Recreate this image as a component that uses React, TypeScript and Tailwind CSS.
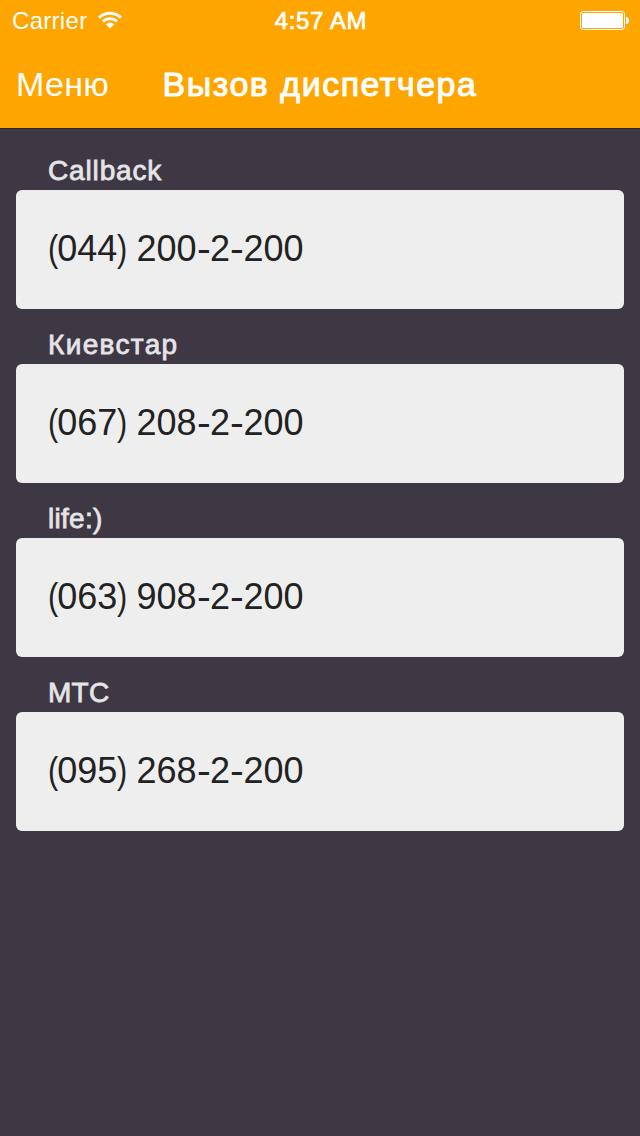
import React from "react";

interface Dispatcher {
  name: string;
  phone: string;
  nameClass: string;
}

const dispatchers: Dispatcher[] = [
  { name: "Callback", phone: "(044) 200-2-200", nameClass: "tracking-[0.85px]" },
  { name: "Киевстар", phone: "(067) 208-2-200", nameClass: "tracking-[1.35px]" },
  { name: "life:)", phone: "(063) 908-2-200", nameClass: "tracking-[0.3px]" },
  { name: "МТС", phone: "(095) 268-2-200", nameClass: "tracking-[0.3px]" },
];

const WifiIcon = () => (
  <svg className="ml-[10px] -mt-0.5" width="26" height="18" viewBox="0 0 26 18" fill="none">
    <path d="M2.1 6.700a15.4 15.4 0 0 1 21.8 0" stroke="white" strokeWidth="3" />
    <path d="M5.9 10.500a10 10 0 0 1 14.2 0" stroke="white" strokeWidth="2.800" />
    <path d="M8.7 13.300a6.1 6.1 0 0 1 8.6 0L13 17.600z" fill="white" />
  </svg>
);

const BatteryIcon = () => (
  <svg width="50" height="20" viewBox="0 0 50 20" fill="none">
    <rect x="0.5" y="0.5" width="44" height="18" rx="2.5" stroke="white" />
    <rect x="2" y="2" width="41" height="15" rx="1.5" fill="white" />
    <path d="M46 6c2 0 3 1.500 3 3.500s-1 3.500-3 3.500z" fill="white" />
  </svg>
);

const StatusBar = () => (
  <div className="h-10 pt-0.5 grid grid-cols-3 items-center pl-3 pr-[10px] text-2xl leading-none">
    <div className="flex items-center">
      <span className="tracking-[0.3px]">Carrier</span>
      <WifiIcon />
    </div>
    <span className="text-center tracking-[0.6px] [-webkit-text-stroke:0.7px_white]">4:57 AM</span>
    <div className="flex justify-end">
      <BatteryIcon />
    </div>
  </div>
);

const NavBar = () => (
  <div className="h-[88px] grid grid-cols-[120px_1fr_120px] items-center px-4 text-[34px] leading-none">
    <button className="text-left tracking-[0.3px]">Меню</button>
    <h1 className="text-center whitespace-nowrap tracking-[1.5px] [-webkit-text-stroke:1px_white]">Вызов диспетчера</h1>
  </div>
);

// narrow brackets and wide hyphens
const charClass = (char: string) => {
  if (char === "(" || char === ")") return "inline-block w-[9.2px] origin-left scale-x-[0.85]";
  if (char === "-") return "inline-block w-[13.5px] origin-left scale-x-[1.15]";
  return "";
};

const PhoneNumber = ({ value }: { value: string }) => (
  <span className="whitespace-pre">
    {value.split(/([()-])/).map((part, i) => (
      <span key={i} className={charClass(part)}>{part}</span>
    ))}
  </span>
);

const App = () => {
  return (
    <div className="w-[640px] h-[1136px] overflow-hidden bg-[#3e3744] font-['Liberation_Sans',Arial,sans-serif]">
      <header className="h-[129px] bg-[#ffa500] text-white border-b border-[#2b2530]">
        <StatusBar />
        <NavBar />
      </header>
      <main className="px-4 pt-[6px]">
        {dispatchers.map((item) => (
          <section key={item.phone}>
            <h2 className="h-[55px] pl-8 pt-5 text-[28px] leading-8 text-[#e5e4e6] [-webkit-text-stroke:0.8px_#e5e4e6]">
              <span className={item.nameClass}>{item.name}</span>
            </h2>
            <div className="h-[119px] flex items-center pb-0.5 pl-8 rounded-md bg-[#eeeeee] text-4xl text-[#222222]">
              <PhoneNumber value={item.phone} />
            </div>
          </section>
        ))}
      </main>
    </div>
  );
};

export default App;
